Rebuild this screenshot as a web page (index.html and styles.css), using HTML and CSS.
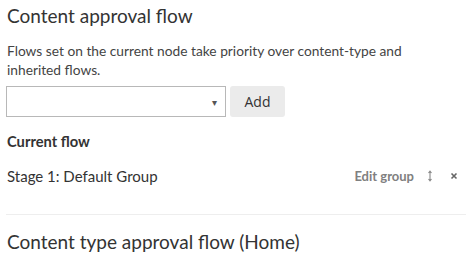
FILE: index.html
```html
<!DOCTYPE html>
<html lang="en">
<head>
    <meta charset="UTF-8">
    <title>Approval flow</title>
    <link rel="stylesheet" href="styles.css">
</head>
<body>
    <div class="panel">
        <h2>Content approval flow</h2>
        <p class="help">Flows set on the current node take priority over content-type and inherited flows.</p>
        <div class="add-row">
            <div class="select">
                <span class="caret">&#9662;</span>
            </div>
            <button class="btn">Add</button>
        </div>
        <h4>Current flow</h4>
        <div class="stage">
            <span class="stage-name">Stage 1: Default Group</span>
            <span class="actions">
                <a class="edit">Edit group</a>
                <svg class="icon move" width="8" height="12" viewBox="0 0 8 12">
                    <path d="M4 1.5v9M2.5 3L4 1.2 5.5 3M2.5 9L4 10.8 5.5 9" stroke="#888" stroke-width="1.1" fill="none"/>
                </svg>
                <svg class="icon remove" width="8" height="8" viewBox="0 0 8 8">
                    <path d="M1.5 1.5l5 5M6.5 1.5l-5 5" stroke="#666" stroke-width="1.6" fill="none"/>
                </svg>
            </span>
        </div>
        <hr>
        <h2>Content type approval flow (Home)</h2>
    </div>
</body>
</html>
```

FILE: styles.css
```css
body {
    margin: 0;
    font-family: Lato, "Open Sans", sans-serif;
    color: #333;
    background: #fff;
}
.panel {
    padding: 0 7px 0 6px;
}
h2 {
    font-size: 19px;
    font-weight: 400;
    margin: 0;
    padding: 4px 0 0 1px;
    line-height: 24px;
}
.help {
    font-size: 13.75px;
    line-height: 19px;
    max-width: 440px;
    margin: 13px 0 0 1px;
    color: #444;
}
.add-row {
    display: flex;
    margin-top: 7px;
}
.select {
    box-sizing: border-box;
    width: 220px;
    height: 31px;
    border: 1px solid #b8b8b8;
    display: flex;
    align-items: center;
    justify-content: flex-end;
    padding-right: 8px;
}
.caret {
    font-size: 10px;
    color: #555;
}
.btn {
    margin-left: 4px;
    width: 55px;
    height: 31px;
    border: none;
    border-radius: 3px;
    background: #ebebeb;
    font-family: "Open Sans", sans-serif;
    font-size: 14px;
    color: #333;
}
h4 {
    font-size: 14.7px;
    font-weight: 700;
    margin: 15px 0 0 1px;
    line-height: 18px;
}
.stage {
    display: flex;
    justify-content: space-between;
    align-items: center;
    margin-top: 17px;
    font-size: 15px;
    line-height: 18px;
}
.stage-name {
    padding-left: 1px;
}
.actions {
    display: flex;
    align-items: center;
    padding-right: 8px;
}
.edit {
    color: #808080;
    font-weight: 700;
    font-size: 13px;
}
.move {
    margin-left: 12px;
}
.remove {
    margin-left: 16px;
}
hr {
    border: none;
    border-top: 1px solid #eeeeee;
    margin: 29px 0 0;
}
hr + h2 {
    padding-top: 15px;
}
```
